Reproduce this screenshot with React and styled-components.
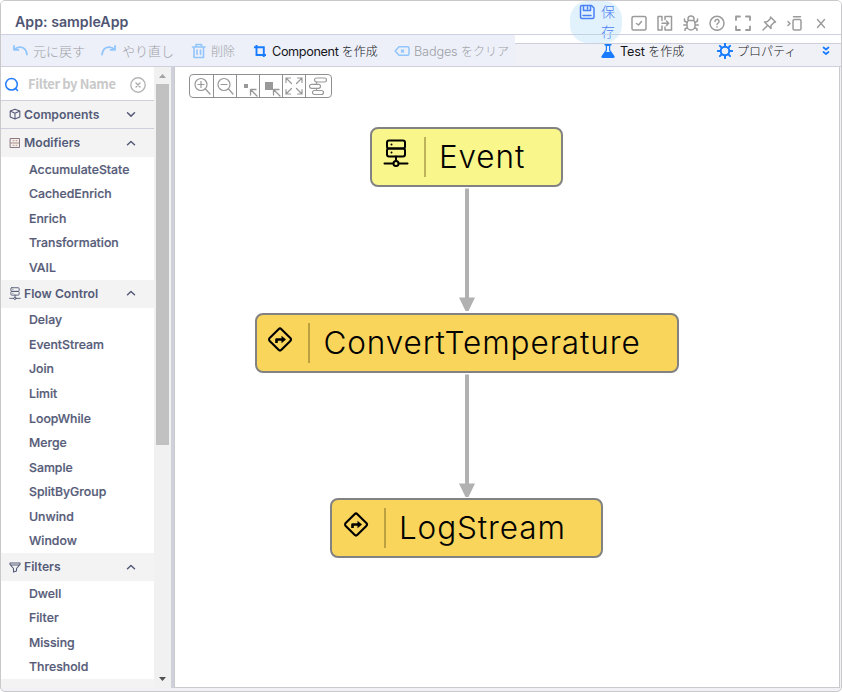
import React from "react";
import styled, { createGlobalStyle } from "styled-components";

const GlobalStyle = createGlobalStyle`
  * { box-sizing: border-box; }
  body { margin: 0; background: #fff; font-family: Inter, "Noto Sans CJK JP", sans-serif; }
`;

const Window = styled.div`
  width: 842px;
  height: 692px;
  display: flex;
  flex-direction: column;
  border: 1px solid #c9c9cb;
  border-radius: 5px;
  background: #f1f1f6;
  overflow: hidden;
`;

const TitleBar = styled.header`
  height: 33px;
  flex: none;
  display: flex;
  align-items: flex-start;
  background: #fff;
`;

const Title = styled.h1`
  margin: 0;
  padding: 12px 0 0 14px;
  width: 569px;
  font-size: 14.2px;
  line-height: 18px;
  font-weight: 600;
  color: #4f5673;
`;

const SaveButton = styled.div`
  position: relative;
  z-index: 1;
  flex: none;
  width: 52px;
  height: 42px;
  padding: 3px 6px 0 9px;
  display: flex;
  gap: 6px;
  border-radius: 18px;
  background: #e1f2fd;
  color: #4a80f5;
  &::after {
    content: "";
    position: absolute;
    left: 0;
    right: 0;
    top: 33px;
    height: 1px;
    background: #c6d2e2;
  }
`;

const SaveLabel = styled.span`
  width: 14px;
  font-size: 14px;
  line-height: 20px;
  font-weight: 300;
  word-break: break-all;
  margin-top: -2px;
`;

const WindowActions = styled.div`
  display: flex;
  gap: 10px;
  padding: 14px 0 0 9px;
  color: #9b9b9b;
`;

const Toolbar = styled.nav`
  height: 33px;
  flex: none;
  display: flex;
  border-top: 1px solid #cdd0de;
  border-bottom: 1px solid #cdd0dc;
  background: #edf0f9;
`;

const MainTools = styled.div`
  width: 514px;
  display: flex;
  align-items: center;
`;

const SideTools = styled.div`
  flex: 1;
  display: flex;
  align-items: flex-start;
  border-top: 8px solid #fff;
  background: #f0f1f6;
  box-shadow: inset 0 1px #cdd0dc;
`;

const Tool = styled.div`
  display: flex;
  align-items: center;
  flex: none;
  gap: ${(p) => p.$gap || 5}px;
  margin-left: ${(p) => p.$before || 0}px;
  width: ${(p) => p.$width}px;
  height: ${(p) => (p.$short ? 15 : 17)}px;
  white-space: pre;
  font-size: 12.7px;
  line-height: 17px;
  color: ${(p) => (p.$disabled ? "#9d9fa6" : "#15161a")};
  svg { color: ${(p) => (p.$disabled ? "#91c5fc" : "#197bff")}; flex: none; }
`;

const ToolText = styled.span`
  font-weight: ${(p) => (p.$light ? 300 : 400)};
  letter-spacing: ${(p) => p.$spacing || 0}px;
`;

const Kana = styled.span`
  font-family: "Noto Sans CJK JP", sans-serif;
  font-size: ${(p) => p.$size || 12}px;
  font-weight: 300;
  letter-spacing: 0;
`;

const Body = styled.main`
  flex: 1;
  min-height: 0;
  display: flex;
  padding: 0 1px 3px 0;
`;

const Sidebar = styled.aside`
  width: 153px;
  display: flex;
  flex-direction: column;
  overflow: hidden;
  background: #fff;
  color: #555b78;
`;

const Search = styled.div`
  height: 34px;
  flex: none;
  display: flex;
  align-items: center;
  padding: 2px 8px 0 3px;
  border-bottom: 1px solid #cdcfdc;
  color: #c9c9c9;
  font: 700 13px/20px "Noto Sans CJK JP", sans-serif;
  letter-spacing: -0.4px;
`;

const SearchText = styled.span`
  flex: 1;
  padding-left: 9px;
  margin-top: -2px;
  white-space: nowrap;
`;

const GroupHeader = styled.div`
  height: 28px;
  flex: none;
  display: flex;
  align-items: center;
  padding: 0 18px 1px 8px;
  gap: 3px;
  background: #f3f3f3;
  border-bottom: ${(p) => (p.$line ? "1px solid #cdcfdc" : "none")};
  font-size: 12.2px;
  font-weight: 600;
`;

const GroupName = styled.span`
  flex: 1;
`;

const Item = styled.div`
  height: 24.55px;
  flex: none;
  padding: 0.6px 0 0 28px;
  font-size: 12.3px;
  line-height: 24.5px;
  font-weight: 500;
  -webkit-text-stroke: 0.2px #555b78;
`;

const Scrollbar = styled.div`
  width: 17px;
  flex: none;
  display: flex;
  flex-direction: column;
  align-items: center;
  justify-content: space-between;
  background: #f1f1f1;
`;

const ScrollTop = styled.div`
  display: flex;
  flex-direction: column;
  align-items: center;
`;

const ScrollThumb = styled.div`
  width: 13px;
  height: 361px;
  background: #c1c1c1;
`;

const Splitter = styled.div`
  width: 3px;
  flex: none;
  background: #cfd0da;
`;

const Canvas = styled.section`
  flex: 1;
  background: #fff;
  border: solid #c8cacd;
  border-width: 0 1px 1px 1px;
  padding: 7px 0 0 14px;
`;

const ZoomBar = styled.div`
  width: 143px;
  height: 24px;
  display: flex;
  border: 1px solid #8f8f8f;
  border-radius: 4px;
  overflow: hidden;
`;

const ZoomButton = styled.div`
  width: ${(p) => p.$width || 23}px;
  flex: none;
  display: flex;
  align-items: center;
  justify-content: center;
  color: #999;
  & + & { border-left: 1px solid #8f8f8f; }
`;

const Flow = styled.div`
  display: flex;
  flex-direction: column;
  align-items: center;
  width: 555.4px;
  margin-top: 29px;
`;

const Node = styled.div`
  width: ${(p) => p.$width}px;
  height: 60px;
  flex: none;
  display: flex;
  align-items: center;
  border: 2px solid #828282;
  border-radius: 8px;
  background: ${(p) => p.$fill};
`;

const NodeIcon = styled.div`
  width: 51.7px;
  height: 40px;
  display: flex;
  padding: 2px 0 0 10.5px;
  color: #000;
`;

const NodeDivider = styled.div`
  width: 2px;
  height: 40px;
  background: rgba(100, 80, 20, 0.4);
`;

const NodeLabel = styled.span`
  padding-left: 13px;
  font-size: 31.5px;
  line-height: 40px;
  font-weight: 300;
  letter-spacing: 0.9px;
  color: #000;
`;

const Connector = () => (
  <svg width="18" height="125.6" viewBox="0 0 18 125.6">
    <path d="M7 1.500h4v109h6l-6.500 13.500h-3L1 110.500h6z" fill="#b1b1b1" />
  </svg>
);

const Icon = ({ s = 16, w = 1.3, children, h }) => (
  <svg width={s} height={h || s} viewBox={`0 0 ${s} ${h || s}`} fill="none" stroke="currentColor" strokeWidth={w} strokeLinecap="round" strokeLinejoin="round">
    {children}
  </svg>
);

const SaveIcon = () => (
  <Icon w={1.5}><path d="M1.500 3q0-1.500 1.500-1.500h9.500l2.500 2.500v9q0 1.500-1.500 1.500H3q-1.500 0-1.500-1.500zM4.500 1.500v5h7v-5M8.500 3v2M4 11.500h8" /></Icon>
);
const CheckBoxIcon = () => (
  <Icon w={1.5}><rect x="1" y="1.500" width="14" height="13.500" rx="1.500" /><path d="m5.500 8.500 2 1.500 3-3.500" /></Icon>
);
const TransferIcon = () => (
  <Icon w={1.5}><path d="M5 5.500v-4H1V15h4v-4M8 4.500v-3h6.500V15H8v-3M5 8.200h6.500M9.500 6l2.200 2.200-2.200 2.200" /></Icon>
);
const BugIcon = () => (
  <Icon w={1.5}><path d="M5 5.500V4a3 3 0 0 1 6 0v1.500M5.500 5.500h5q1.500 1 1.500 3V11a4 4 0 0 1-8 0V8.500q0-2 1.500-3zM4 7.500 1.500 6V4M12 7.500 14.500 6V4M4 10H.700M12 10h3.300M4.500 12.500 2 14v1.500M11.500 12.500 14 14v1.500" /></Icon>
);
const HelpIcon = () => (
  <Icon w={1.5}><circle cx="8" cy="8.300" r="7" /><path d="M6 6.500a2 2 0 1 1 3 1.600q-1 .5-1 1.500M8 11.700v.2" /></Icon>
);
const ExpandIcon = () => (
  <Icon w={1.8}><path d="M1 5V1.500h4M11 1.500h4V5M15 11.500V15h-4M5 15H1v-3.500" /></Icon>
);
const PinIcon = () => (
  <Icon w={1.5}><path d="m9.500 2 5 5-1.500.5-3 3 0 3L3.500 7l3-.5 3-3zM6.500 10.500 2 15" /></Icon>
);
const DockIcon = () => (
  <Icon w={1.5}><rect x="6" y="4.500" width="8" height="10.500" rx="1.500" /><path d="M6.500 1.800h7M1 6.500l2 2-2 2" /></Icon>
);
const CloseIcon = () => (
  <Icon w={1.4}><path d="m4.500 4.500 7 8M11.500 4.500l-7 8" /></Icon>
);
const UndoIcon = () => (
  <Icon w={1.8}><path d="M2 2.800v4h4.500M2.500 6.500Q5 4 8.500 4.200q5.500.5 6.500 7.300" /></Icon>
);
const RedoIcon = () => (
  <Icon w={1.8}><path d="M14 2.800v4H9.500M13.500 6.500Q11 4 7.500 4.200 2 4.700 1 11.500" /></Icon>
);
const TrashIcon = () => (
  <Icon w={1.6}><path d="M1.500 4h12.500M5 4V1.500h5.500V4M3 4v10.500h9.500V4M6 7v4.500M9.500 7v4.500" /></Icon>
);
const CropIcon = () => (
  <Icon s={14} w={1.9}><path d="M3.500 1v10H13M1 3.300h9.800V13" strokeLinecap="butt" strokeLinejoin="miter" /></Icon>
);
const BadgeIcon = () => (
  <Icon w={1.5}><path d="M5 3.800h8.500q1.500 0 1.500 1.500v5.400q0 1.500-1.500 1.500H5L1.200 8zM7.500 7l2 2M9.500 7l-2 2" /></Icon>
);
const FlaskIcon = () => (
  <svg width="14" height="16" viewBox="0 0 14 16" fill="currentColor">
    <path d="M3.500 1h7v1.500H9.200V7l4.200 6q.8 2-1 2H1.600q-1.800 0-1-2l4.200-6V2.500H3.500z" />
    <path d="M6 3h2v4.500L9 9H5l1-1.500z" fill="#e8f1fc" />
  </svg>
);
const GearIcon = () => (
  <Icon w={2}><circle cx="8" cy="8" r="4.300" /><path d="M8 .8v2.500M8 12.700v2.500M.800 8h2.500M12.700 8h2.500M2.900 2.900l1.800 1.800M11.300 11.300l1.800 1.800M13.100 2.900l-1.800 1.800M4.700 11.300l-1.800 1.800" /></Icon>
);
const DoubleChevronIcon = () => (
  <Icon s={8} h={10} w={1.7}><path d="m1.500 1.500 2.500 2 2.500-2M1.500 6l2.500 2 2.500-2" /></Icon>
);
const SearchIcon = () => (
  <Icon s={15} w={1.5}><g stroke="#217cff"><circle cx="7.500" cy="7.300" r="5.800" /><path d="m11.500 11.500 2 2" /></g></Icon>
);
const ClearIcon = () => (
  <Icon w={1.4}><circle cx="8" cy="8" r="7.200" stroke="#b5b5b5" /><path d="m6 6 4 4M10 6l-4 4" stroke="#aaa" /></Icon>
);
const CubeIcon = () => (
  <Icon s={12} w={1.1}><path d="m1.200 3 4.800-1.800L10.800 3v6L6 10.900 1.200 9zM1.200 3 6 5.200 10.800 3M6 5.200v5.700" /></Icon>
);
const GridIcon = () => (
  <Icon s={12} w={1}><rect x="1.500" y="1.500" width="9" height="9" stroke="#8a7580" /><path d="M1.500 6h9" stroke="#a98b86" /><path d="M4 3.700h1M7 3.700h1M4 8.300h1M7 8.300h1" stroke="#c58f71" /></Icon>
);
const ServerIcon = ({ small }) => (
  <svg width={small ? 12 : 26} height={small ? 13 : 28} viewBox="0 0 26 28" fill="none" stroke="currentColor" strokeWidth="2" strokeLinecap="round" strokeLinejoin="round">
    <rect x="4" y="1.500" width="18" height="8" rx="2" />
    <rect x="4" y="9.500" width="18" height="8" rx="2" />
    <path d="M8.500 5.500v.1M8.500 13.500v.1M13 17.500v4M1.500 24.500h8.500M16 24.500h8.500" />
    <circle cx="13" cy="24.500" r="2.500" />
  </svg>
);
const FunnelIcon = () => (
  <Icon s={12} w={1.1}><path d="M1 2h10v1.500L7.500 7.500V10l-3 1V7.500L1 3.500zM1.500 4h9" /></Icon>
);
const RouteIcon = () => (
  <svg width="26" height="28" viewBox="0 0 26 28" fill="none" stroke="#000" strokeWidth="2.100" strokeLinejoin="round">
    <rect x="4.700" y="6.200" width="16.600" height="16.600" rx="2" transform="rotate(45 13 14.500)" />
    <path d="M9.500 18v-3.500h6" strokeWidth="2.600" />
    <path d="m14.500 10.700 4.500 3.800-4.500 3.800z" fill="#000" stroke="none" />
  </svg>
);
const Chevron = ({ up }) => (
  <Icon s={10} w={1.5}><path d={up ? "m1.500 6.800 3.500-3.300 3.500 3.300" : "m1.500 3.800 3.500 3.300 3.500-3.300"} /></Icon>
);
const Magnifier = ({ plus }) => (
  <Icon s={20} w={1.2}><circle cx="9" cy="8.500" r="6" /><path d="m13.500 13 4.500 5M6 8.500h6" />{plus && <path d="M9 5.500v6" />}</Icon>
);
const ResizeIcon = ({ large }) => (
  <Icon s={22} w={1.3}>
    <rect x={large ? 5 : 7} y={large ? 7 : 9} width={large ? 8 : 4} height={large ? 8 : 4} fill="currentColor" stroke="none" />
    <path d="m20 21-6-6M13.500 20v-5.500H19" />
  </Icon>
);
const FitIcon = () => (
  <Icon s={20} w={1.2}><path d="M2 6.500V2h4.500M2 2l5.500 5.500M13.500 2H18v4.500M18 2l-5.500 5.500M2 13.500V18h4.500M2 18l5.500-5.500M18 13.500V18h-4.500M18 18l-5.500-5.500" /></Icon>
);
const LayoutIcon = () => (
  <Icon s={20} w={1.2}><rect x="6.500" y="2" width="12" height="4" rx="2" /><rect x="1.500" y="8.300" width="11" height="4" rx="2" /><rect x="4.500" y="14.500" width="11" height="4" rx="2" /><path d="M8.500 6v2.300M8.500 12.300v2.200" /></Icon>
);

const groups = [
  { name: "Modifiers", icon: <GridIcon />, items: ["AccumulateState", "CachedEnrich", "Enrich", "Transformation", "VAIL"] },
  { name: "Flow Control", icon: <ServerIcon small />, items: ["Delay", "EventStream", "Join", "Limit", "LoopWhile", "Merge", "Sample", "SplitByGroup", "Unwind", "Window"] },
  { name: "Filters", icon: <FunnelIcon />, items: ["Dwell", "Filter", "Missing", "Threshold"] },
];

const nodes = [
  { label: "Event", width: 193, fill: "#f9f68b", icon: <ServerIcon /> },
  { label: "ConvertTemperature", width: 424, fill: "#f9d55c", icon: <RouteIcon /> },
  { label: "LogStream", width: 273, fill: "#f9d55c", icon: <RouteIcon /> },
];

export default function App() {
  return (
    <>
      <GlobalStyle />
      <Window>
        <TitleBar>
          <Title>App: sampleApp</Title>
          <SaveButton><SaveIcon /><SaveLabel>保存</SaveLabel></SaveButton>
          <WindowActions>
            <CheckBoxIcon /><TransferIcon /><BugIcon /><HelpIcon /><ExpandIcon /><PinIcon /><DockIcon /><CloseIcon />
          </WindowActions>
        </TitleBar>
        <Toolbar>
          <MainTools>
            <Tool $disabled $before={11} $width={89}><UndoIcon /><Kana $size={13}>元に戻す</Kana></Tool>
            <Tool $disabled $width={90}><RedoIcon /><Kana $size={13}>やり直し</Kana></Tool>
            <Tool $disabled $width={62} $gap={4}><TrashIcon /><Kana>削除</Kana></Tool>
            <Tool $width={141}><CropIcon /><ToolText $spacing={-0.38}>Component <Kana>を作成</Kana></ToolText></Tool>
            <Tool $disabled $width={118} $gap={4}><BadgeIcon /><ToolText $light $spacing={-0.15}>Badges <Kana>をクリア</Kana></ToolText></Tool>
          </MainTools>
          <SideTools>
            <Tool $short $before={86} $width={116} $gap={5}><FlaskIcon /><ToolText $spacing={-0.15}>Test <Kana>を作成</Kana></ToolText></Tool>
            <Tool $short $width={105} $gap={4}><GearIcon /><Kana>プロパティ</Kana></Tool>
            <Tool $short $width={10}><DoubleChevronIcon /></Tool>
          </SideTools>
        </Toolbar>
        <Body>
          <Sidebar>
            <Search><SearchIcon /><SearchText>Filter by Name</SearchText><ClearIcon /></Search>
            <GroupHeader $line><CubeIcon /><GroupName>Components</GroupName><Chevron /></GroupHeader>
            {groups.map((g) => (
              <React.Fragment key={g.name}>
                <GroupHeader>{g.icon}<GroupName>{g.name}</GroupName><Chevron up /></GroupHeader>
                {g.items.map((i) => <Item key={i}>{i}</Item>)}
              </React.Fragment>
            ))}
            <GroupHeader />
          </Sidebar>
          <Scrollbar>
            <ScrollTop>
              <svg width="17" height="17" viewBox="0 0 17 17"><path d="M5 11h7L8.500 7z" fill="#a3a3a3" /></svg>
              <ScrollThumb />
            </ScrollTop>
            <svg width="17" height="17" viewBox="0 0 17 17"><path d="M5 6h7l-3.500 4z" fill="#505050" /></svg>
          </Scrollbar>
          <Splitter />
          <Canvas>
            <ZoomBar>
              <ZoomButton><Magnifier plus /></ZoomButton>
              <ZoomButton><Magnifier /></ZoomButton>
              <ZoomButton><ResizeIcon /></ZoomButton>
              <ZoomButton><ResizeIcon large /></ZoomButton>
              <ZoomButton><FitIcon /></ZoomButton>
              <ZoomButton $width={25}><LayoutIcon /></ZoomButton>
            </ZoomBar>
            <Flow>
              {nodes.map((n, i) => (
                <React.Fragment key={n.label}>
                  {i > 0 && <Connector />}
                  <Node $width={n.width} $fill={n.fill}>
                    <NodeIcon>{n.icon}</NodeIcon>
                    <NodeDivider />
                    <NodeLabel>{n.label}</NodeLabel>
                  </Node>
                </React.Fragment>
              ))}
            </Flow>
          </Canvas>
        </Body>
      </Window>
    </>
  );
}
